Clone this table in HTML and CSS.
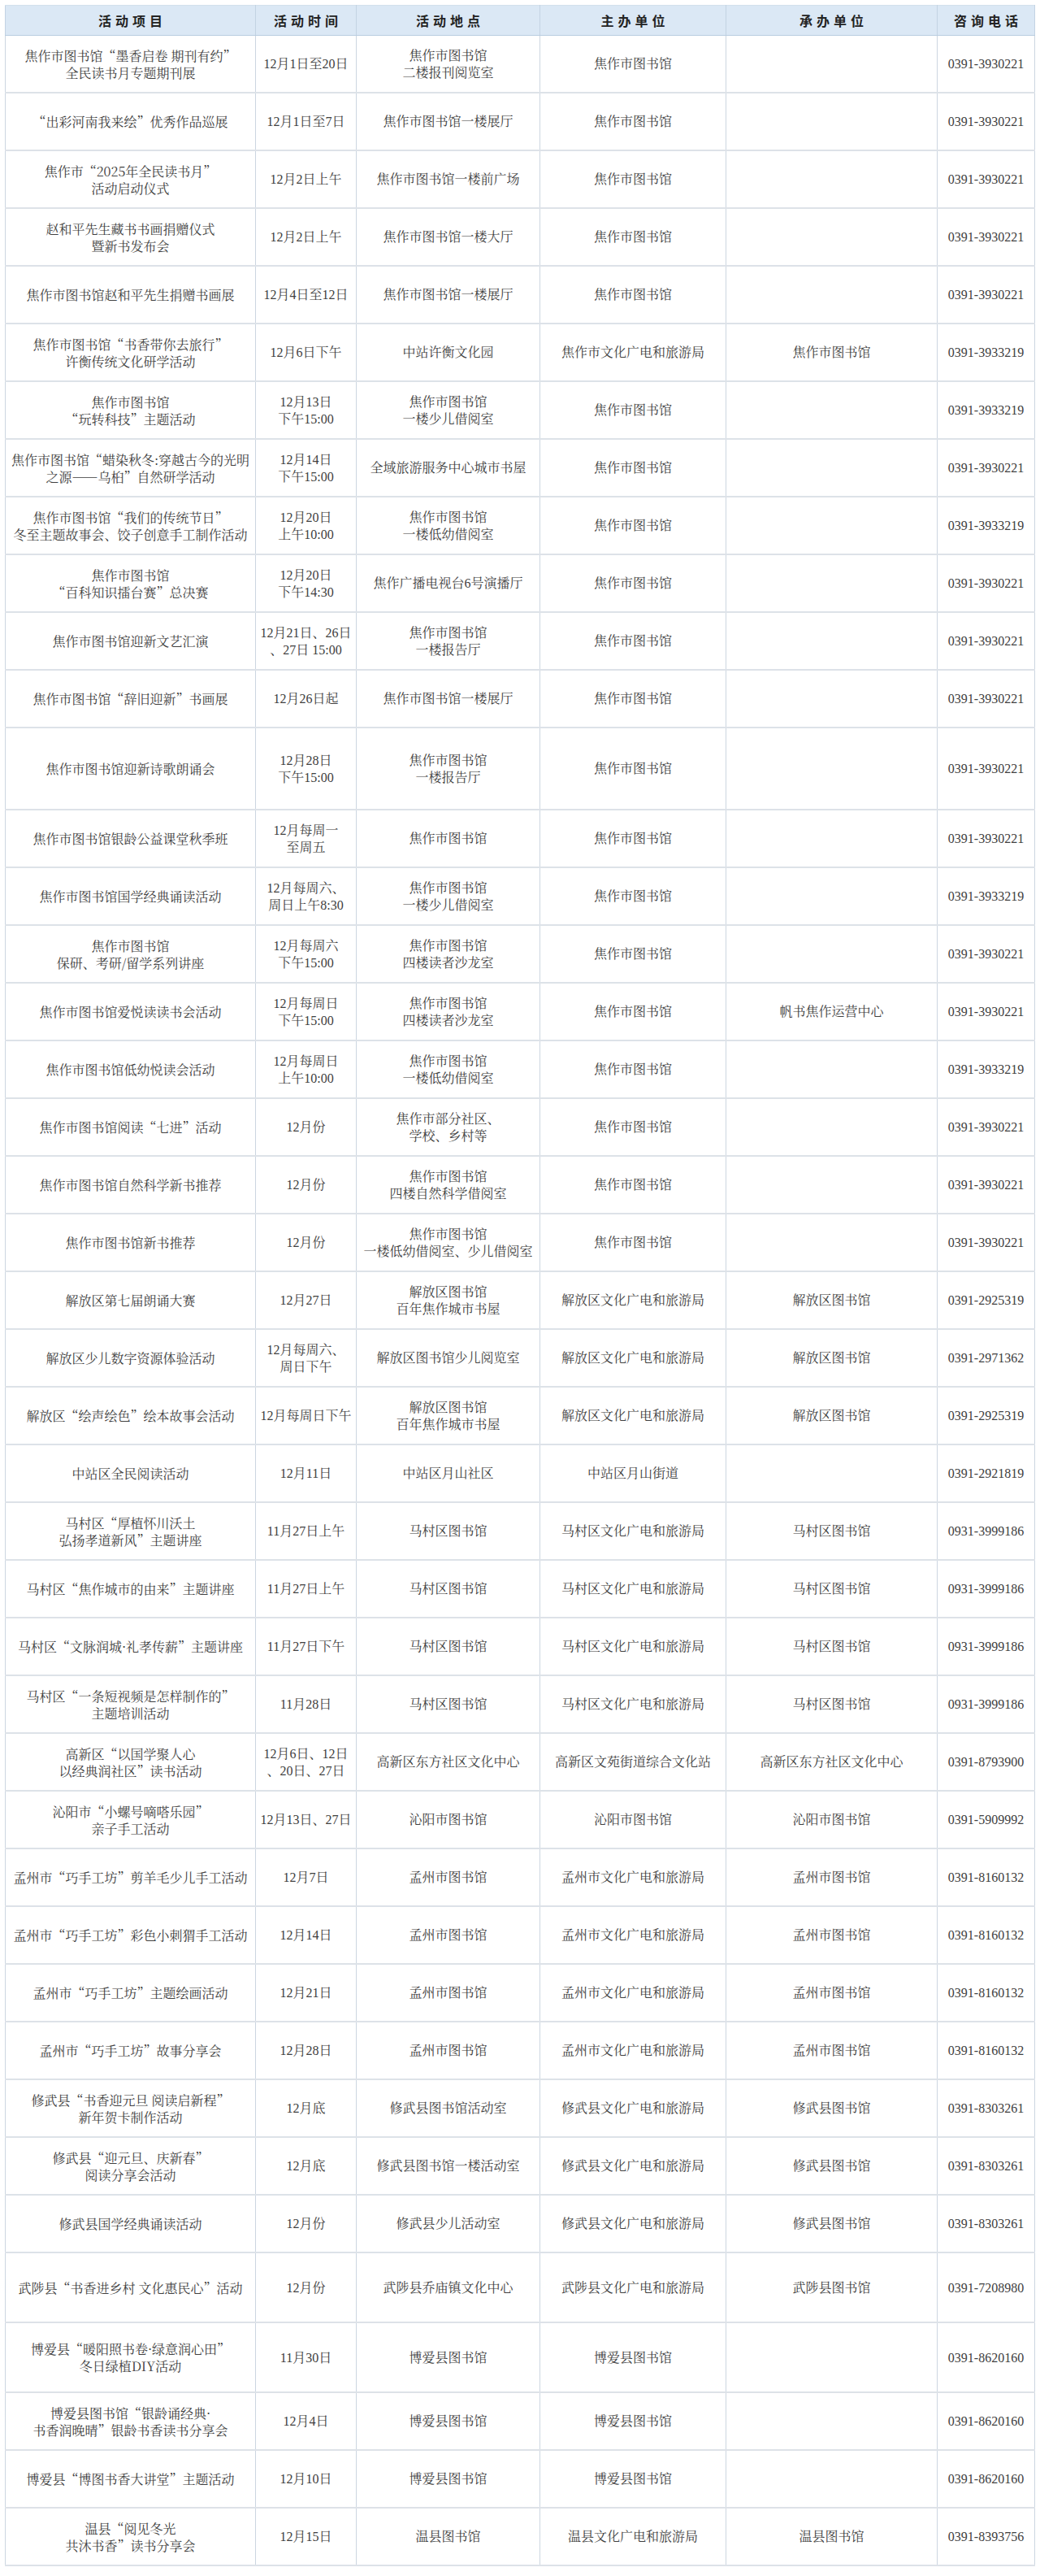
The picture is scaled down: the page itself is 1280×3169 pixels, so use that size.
FILE: index.html
```html
<!DOCTYPE html>
<html lang="zh-CN">
<head>
<meta charset="utf-8">
<title>活动安排</title>
<link rel="stylesheet" href="styles.css">
</head>
<body>
<div class="sheet">
<table class="schedule">
<colgroup>
<col class="c-item"><col class="c-time"><col class="c-place"><col class="c-host"><col class="c-org"><col class="c-tel">
</colgroup>
<thead>
<tr class="head"><th>活动项目</th><th>活动时间</th><th>活动地点</th><th>主办单位</th><th>承办单位</th><th>咨询电话</th></tr>
</thead>
<tbody>
<tr><td>焦作市图书馆“墨香启卷 期刊有约”<br>全民读书月专题期刊展</td><td>12月1日至20日</td><td>焦作市图书馆<br>二楼报刊阅览室</td><td>焦作市图书馆</td><td></td><td>0391-3930221</td></tr>
<tr><td>“出彩河南我来绘”优秀作品巡展</td><td>12月1日至7日</td><td>焦作市图书馆一楼展厅</td><td>焦作市图书馆</td><td></td><td>0391-3930221</td></tr>
<tr><td>焦作市“2025年全民读书月”<br>活动启动仪式</td><td>12月2日上午</td><td>焦作市图书馆一楼前广场</td><td>焦作市图书馆</td><td></td><td>0391-3930221</td></tr>
<tr><td>赵和平先生藏书书画捐赠仪式<br>暨新书发布会</td><td>12月2日上午</td><td>焦作市图书馆一楼大厅</td><td>焦作市图书馆</td><td></td><td>0391-3930221</td></tr>
<tr><td>焦作市图书馆赵和平先生捐赠书画展</td><td>12月4日至12日</td><td>焦作市图书馆一楼展厅</td><td>焦作市图书馆</td><td></td><td>0391-3930221</td></tr>
<tr><td>焦作市图书馆“书香带你去旅行”<br>许衡传统文化研学活动</td><td>12月6日下午</td><td>中站许衡文化园</td><td>焦作市文化广电和旅游局</td><td>焦作市图书馆</td><td>0391-3933219</td></tr>
<tr><td>焦作市图书馆<br>“玩转科技”主题活动</td><td>12月13日<br>下午15:00</td><td>焦作市图书馆<br>一楼少儿借阅室</td><td>焦作市图书馆</td><td></td><td>0391-3933219</td></tr>
<tr><td>焦作市图书馆“蜡染秋冬:穿越古今的光明<br>之源——乌桕”自然研学活动</td><td>12月14日<br>下午15:00</td><td>全域旅游服务中心城市书屋</td><td>焦作市图书馆</td><td></td><td>0391-3930221</td></tr>
<tr><td>焦作市图书馆“我们的传统节日”<br>冬至主题故事会、饺子创意手工制作活动</td><td>12月20日<br>上午10:00</td><td>焦作市图书馆<br>一楼低幼借阅室</td><td>焦作市图书馆</td><td></td><td>0391-3933219</td></tr>
<tr><td>焦作市图书馆<br>“百科知识擂台赛”总决赛</td><td>12月20日<br>下午14:30</td><td>焦作广播电视台6号演播厅</td><td>焦作市图书馆</td><td></td><td>0391-3930221</td></tr>
<tr><td>焦作市图书馆迎新文艺汇演</td><td>12月21日、26日<br>、27日 15:00</td><td>焦作市图书馆<br>一楼报告厅</td><td>焦作市图书馆</td><td></td><td>0391-3930221</td></tr>
<tr><td>焦作市图书馆“辞旧迎新”书画展</td><td>12月26日起</td><td>焦作市图书馆一楼展厅</td><td>焦作市图书馆</td><td></td><td>0391-3930221</td></tr>
<tr class="tall"><td>焦作市图书馆迎新诗歌朗诵会</td><td>12月28日<br>下午15:00</td><td>焦作市图书馆<br>一楼报告厅</td><td>焦作市图书馆</td><td></td><td>0391-3930221</td></tr>
<tr><td>焦作市图书馆银龄公益课堂秋季班</td><td>12月每周一<br>至周五</td><td>焦作市图书馆</td><td>焦作市图书馆</td><td></td><td>0391-3930221</td></tr>
<tr><td>焦作市图书馆国学经典诵读活动</td><td>12月每周六、<br>周日上午8:30</td><td>焦作市图书馆<br>一楼少儿借阅室</td><td>焦作市图书馆</td><td></td><td>0391-3933219</td></tr>
<tr><td>焦作市图书馆<br>保研、考研/留学系列讲座</td><td>12月每周六<br>下午15:00</td><td>焦作市图书馆<br>四楼读者沙龙室</td><td>焦作市图书馆</td><td></td><td>0391-3930221</td></tr>
<tr><td>焦作市图书馆爱悦读读书会活动</td><td>12月每周日<br>下午15:00</td><td>焦作市图书馆<br>四楼读者沙龙室</td><td>焦作市图书馆</td><td>帆书焦作运营中心</td><td>0391-3930221</td></tr>
<tr><td>焦作市图书馆低幼悦读会活动</td><td>12月每周日<br>上午10:00</td><td>焦作市图书馆<br>一楼低幼借阅室</td><td>焦作市图书馆</td><td></td><td>0391-3933219</td></tr>
<tr><td>焦作市图书馆阅读“七进”活动</td><td>12月份</td><td>焦作市部分社区、<br>学校、乡村等</td><td>焦作市图书馆</td><td></td><td>0391-3930221</td></tr>
<tr><td>焦作市图书馆自然科学新书推荐</td><td>12月份</td><td>焦作市图书馆<br>四楼自然科学借阅室</td><td>焦作市图书馆</td><td></td><td>0391-3930221</td></tr>
<tr><td>焦作市图书馆新书推荐</td><td>12月份</td><td>焦作市图书馆<br>一楼低幼借阅室、少儿借阅室</td><td>焦作市图书馆</td><td></td><td>0391-3930221</td></tr>
<tr><td>解放区第七届朗诵大赛</td><td>12月27日</td><td>解放区图书馆<br>百年焦作城市书屋</td><td>解放区文化广电和旅游局</td><td>解放区图书馆</td><td>0391-2925319</td></tr>
<tr><td>解放区少儿数字资源体验活动</td><td>12月每周六、<br>周日下午</td><td>解放区图书馆少儿阅览室</td><td>解放区文化广电和旅游局</td><td>解放区图书馆</td><td>0391-2971362</td></tr>
<tr><td>解放区“绘声绘色”绘本故事会活动</td><td>12月每周日下午</td><td>解放区图书馆<br>百年焦作城市书屋</td><td>解放区文化广电和旅游局</td><td>解放区图书馆</td><td>0391-2925319</td></tr>
<tr><td>中站区全民阅读活动</td><td>12月11日</td><td>中站区月山社区</td><td>中站区月山街道</td><td></td><td>0391-2921819</td></tr>
<tr><td>马村区“厚植怀川沃土<br>弘扬孝道新风”主题讲座</td><td>11月27日上午</td><td>马村区图书馆</td><td>马村区文化广电和旅游局</td><td>马村区图书馆</td><td>0931-3999186</td></tr>
<tr><td>马村区“焦作城市的由来”主题讲座</td><td>11月27日上午</td><td>马村区图书馆</td><td>马村区文化广电和旅游局</td><td>马村区图书馆</td><td>0931-3999186</td></tr>
<tr><td>马村区“文脉润城·礼孝传薪”主题讲座</td><td>11月27日下午</td><td>马村区图书馆</td><td>马村区文化广电和旅游局</td><td>马村区图书馆</td><td>0931-3999186</td></tr>
<tr><td>马村区“一条短视频是怎样制作的”<br>主题培训活动</td><td>11月28日</td><td>马村区图书馆</td><td>马村区文化广电和旅游局</td><td>马村区图书馆</td><td>0931-3999186</td></tr>
<tr><td>高新区“以国学聚人心<br>以经典润社区”读书活动</td><td>12月6日、12日<br>、20日、27日</td><td>高新区东方社区文化中心</td><td>高新区文苑街道综合文化站</td><td>高新区东方社区文化中心</td><td>0391-8793900</td></tr>
<tr><td>沁阳市“小螺号嘀嗒乐园”<br>亲子手工活动</td><td>12月13日、27日</td><td>沁阳市图书馆</td><td>沁阳市图书馆</td><td>沁阳市图书馆</td><td>0391-5909992</td></tr>
<tr><td>孟州市“巧手工坊”剪羊毛少儿手工活动</td><td>12月7日</td><td>孟州市图书馆</td><td>孟州市文化广电和旅游局</td><td>孟州市图书馆</td><td>0391-8160132</td></tr>
<tr><td>孟州市“巧手工坊”彩色小刺猬手工活动</td><td>12月14日</td><td>孟州市图书馆</td><td>孟州市文化广电和旅游局</td><td>孟州市图书馆</td><td>0391-8160132</td></tr>
<tr><td>孟州市“巧手工坊”主题绘画活动</td><td>12月21日</td><td>孟州市图书馆</td><td>孟州市文化广电和旅游局</td><td>孟州市图书馆</td><td>0391-8160132</td></tr>
<tr><td>孟州市“巧手工坊”故事分享会</td><td>12月28日</td><td>孟州市图书馆</td><td>孟州市文化广电和旅游局</td><td>孟州市图书馆</td><td>0391-8160132</td></tr>
<tr><td>修武县“书香迎元旦 阅读启新程”<br>新年贺卡制作活动</td><td>12月底</td><td>修武县图书馆活动室</td><td>修武县文化广电和旅游局</td><td>修武县图书馆</td><td>0391-8303261</td></tr>
<tr><td>修武县“迎元旦、庆新春”<br>阅读分享会活动</td><td>12月底</td><td>修武县图书馆一楼活动室</td><td>修武县文化广电和旅游局</td><td>修武县图书馆</td><td>0391-8303261</td></tr>
<tr><td>修武县国学经典诵读活动</td><td>12月份</td><td>修武县少儿活动室</td><td>修武县文化广电和旅游局</td><td>修武县图书馆</td><td>0391-8303261</td></tr>
<tr class="mid"><td>武陟县“书香进乡村 文化惠民心”活动</td><td>12月份</td><td>武陟县乔庙镇文化中心</td><td>武陟县文化广电和旅游局</td><td>武陟县图书馆</td><td>0391-7208980</td></tr>
<tr class="mid"><td>博爱县“暖阳照书卷·绿意润心田”<br>冬日绿植DIY活动</td><td>11月30日</td><td>博爱县图书馆</td><td>博爱县图书馆</td><td></td><td>0391-8620160</td></tr>
<tr><td>博爱县图书馆“银龄诵经典·<br>书香润晚晴”银龄书香读书分享会</td><td>12月4日</td><td>博爱县图书馆</td><td>博爱县图书馆</td><td></td><td>0391-8620160</td></tr>
<tr><td>博爱县“博图书香大讲堂”主题活动</td><td>12月10日</td><td>博爱县图书馆</td><td>博爱县图书馆</td><td></td><td>0391-8620160</td></tr>
<tr><td>温县“阅见冬光<br>共沐书香”读书分享会</td><td>12月15日</td><td>温县图书馆</td><td>温县文化广电和旅游局</td><td>温县图书馆</td><td>0391-8393756</td></tr>
</tbody>
</table>
</div>
</body>
</html>
```

FILE: styles.css
```css
html, body {
  margin: 0;
  padding: 0;
  background: #ffffff;
}

.sheet {
  padding: 6px 0 10px 6px;
}

.schedule {
  border-collapse: collapse;
  table-layout: fixed;
  width: 1267px;
  font-family: "Liberation Serif", "Noto Serif CJK SC", "Noto Sans CJK SC", serif;
  font-size: 16px;
  line-height: 21px;
  color: #404040;
  border-left: 1px solid #ccd6e1;
  border-right: 1px solid #ccd6e1;
  border-bottom: 2px solid #d9dee5;
}

.c-item { width: 308px; }
.c-time { width: 124px; }
.c-place { width: 226px; }
.c-host { width: 229px; }
.c-org { width: 260px; }
.c-tel { width: 120px; }

.head th {
  height: 36px;
  padding: 0 0 0 5px;
  background: #dbe8f5;
  color: #232323;
  font-family: "Noto Sans CJK SC", sans-serif;
  font-weight: 700;
  font-size: 16px;
  letter-spacing: 5px;
  text-align: center;
  vertical-align: middle;
  border-top: 1px solid #d3e0ec;
  border-left: 1px solid #c3d3e3;
  border-right: 1px solid #c3d3e3;
  border-bottom: 1px solid #b9cde0;
}

.schedule td {
  height: 69px;
  padding: 0;
  text-align: center;
  vertical-align: middle;
  white-space: nowrap;
  border-left: 1px solid #ccd6e1;
  border-right: 1px solid #ccd6e1;
  border-bottom: 2px solid #dde2e8;
}

.schedule td:first-child {
  font-family: "Noto Serif CJK SC", "Noto Sans CJK SC", sans-serif;
}

.schedule tr.tall td {
  height: 99px;
}

.schedule tr.mid td {
  height: 84px;
}
```
